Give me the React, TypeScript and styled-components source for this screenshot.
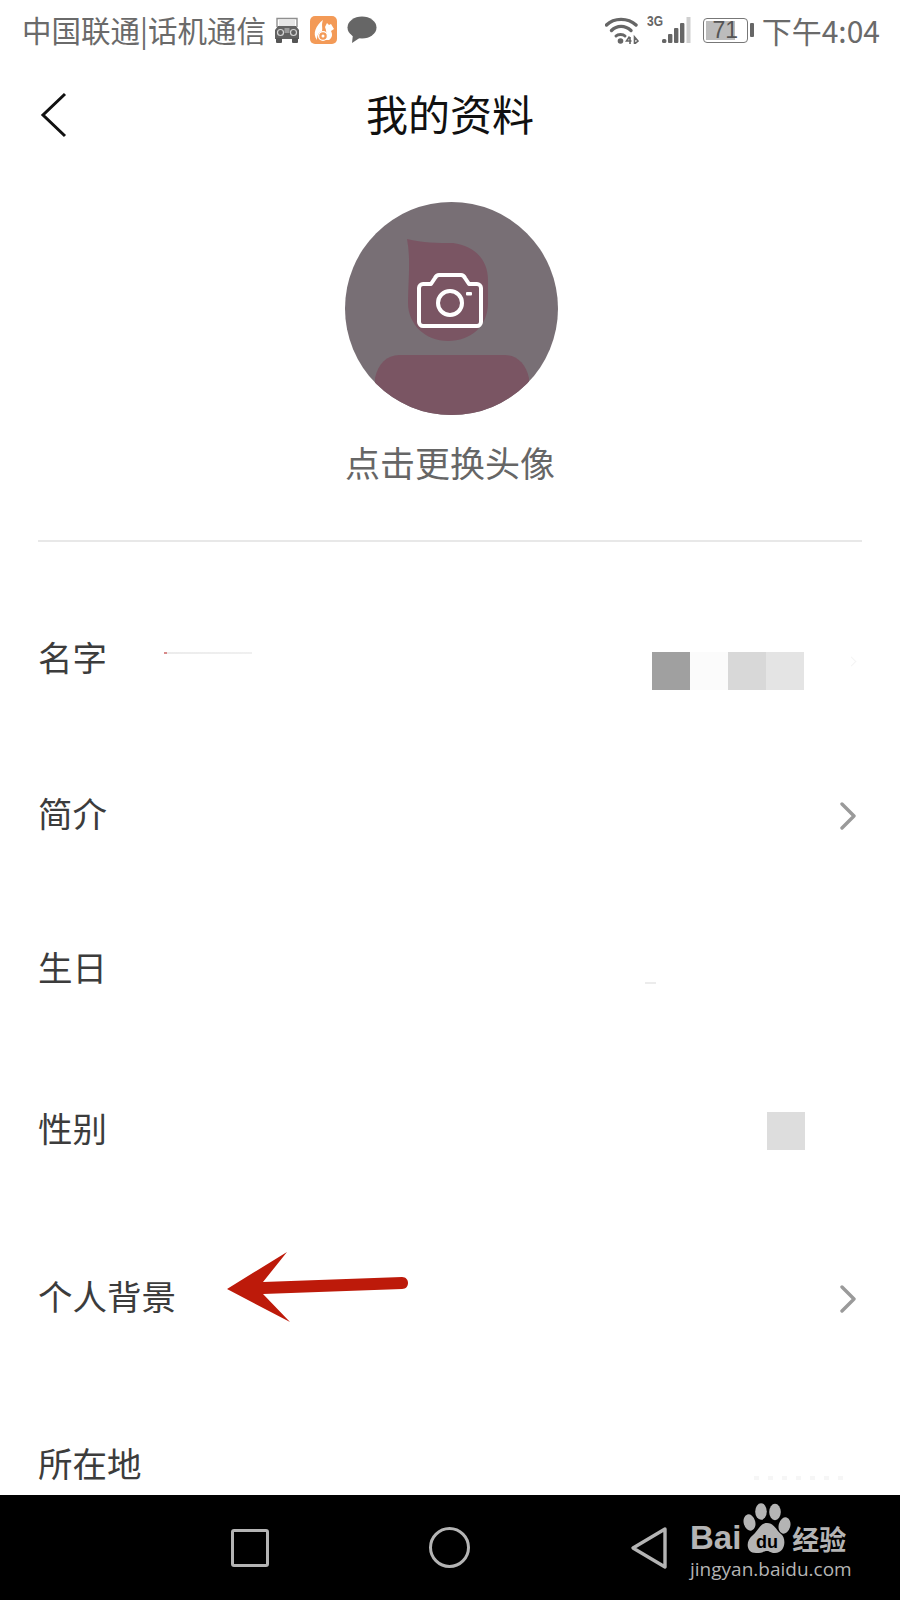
import React from 'react';
import styled, { createGlobalStyle } from 'styled-components';

const GlobalStyle = createGlobalStyle`
  html, body {
    margin: 0;
    padding: 0;
    background: #ffffff;
  }
  body {
    font-family: "Noto Sans CJK SC", "Liberation Sans", sans-serif;
  }
`;

const rows = [
  { label: '名字', height: 156 },
  { label: '简介', height: 155, chevron: true },
  { label: '生日', height: 154 },
  { label: '性别', height: 168 },
  { label: '个人背景', height: 167, chevron: true, pointer: true },
  { label: '所在地', height: 168 },
];

const App = () => {
  return (
    <Screen>
      <GlobalStyle />

      <Content>
        <StatusBar>
          <StatusLeft>
            <Carrier>中国联通|话机通信</Carrier>
            <TruckIcon />
            <UcIcon />
            <BubbleIcon />
          </StatusLeft>
          <StatusRight>
            <WifiIcon />
            <SignalIcon />
            <Battery>
              <BatteryBody>
                <BatteryFill />
                <BatteryText>71</BatteryText>
              </BatteryBody>
              <BatteryTip />
            </Battery>
            <Clock>下午4:04</Clock>
          </StatusRight>
        </StatusBar>

        <TitleBar>
          <BackButton>
            <svg width="28" height="46" viewBox="0 0 28 46" fill="none">
              <path d="M25 2 L3 23 L25 44" stroke="#111" strokeWidth="3" strokeLinejoin="miter" />
            </svg>
          </BackButton>
          <Title>我的资料</Title>
        </TitleBar>

        <AvatarBlock>
          <AvatarIcon />
          <AvatarHint>点击更换头像</AvatarHint>
        </AvatarBlock>

        <Divider />

        <RowList>
          {rows.map((row) => (
            <Row key={row.label} $height={row.height}>
              <RowLabel>{row.label}</RowLabel>
              {row.label === '名字' && <NameSmudge />}
              {row.label === '名字' && (
                <Mosaic>
                  <MosaicCell $shade="#a0a0a0" />
                  <MosaicCell $shade="#fbfbfb" />
                  <MosaicCell $shade="#d8d8d8" />
                  <MosaicCell $shade="#e4e4e4" />
                </Mosaic>
              )}
              {row.label === '名字' && <FaintChevron />}
              {row.label === '生日' && <BirthdaySmudge />}
              {row.label === '性别' && (
                <GenderMosaic>
                  <MosaicCell $shade="#dddddd" />
                </GenderMosaic>
              )}
              {row.label === '所在地' && <PlaceSmudge />}
              {row.chevron && (
                <Chevron>
                  <svg width="18" height="28" viewBox="0 0 18 28" fill="none">
                    <path d="M3 2 L15 14 L3 26" stroke="#9a9a9a" strokeWidth="3.4" strokeLinecap="round" strokeLinejoin="round" />
                  </svg>
                </Chevron>
              )}
              {row.pointer && <RedArrow />}
            </Row>
          ))}
        </RowList>
      </Content>

      <NavBar>
        <NavKeys>
          <NavSquare />
          <NavCircle />
          <NavBack>
            <svg width="38" height="44" viewBox="0 0 38 44" fill="none">
              <path d="M35 3 L3 22 L35 41 Z" stroke="#b4b4b4" strokeWidth="3.4" strokeLinejoin="round" />
            </svg>
          </NavBack>
        </NavKeys>
        <Watermark>
          <WatermarkTop>
            <WatermarkBai>Bai</WatermarkBai>
            <PawIcon />
            <WatermarkCn>经验</WatermarkCn>
          </WatermarkTop>
          <WatermarkUrl>jingyan.baidu.com</WatermarkUrl>
        </Watermark>
      </NavBar>
    </Screen>
  );
};

export default App;

/* drawings */

const TruckIcon = () => (
  <StatusGlyph width="26" height="28" viewBox="0 0 26 28">
    <path d="M3 11 V2.5 H23 V11" fill="none" stroke="#8f8f8f" strokeWidth="1.4" />
    <rect x="5" y="4" width="16" height="6" fill="#e6e6e6" />
    <path d="M4 10 H22 L25 14 V23 H1 V14 Z" fill="#626262" />
    <circle cx="6.5" cy="16.5" r="3" fill="#626262" stroke="#d4d4d4" strokeWidth="1.2" />
    <circle cx="19.5" cy="16.5" r="3" fill="#626262" stroke="#d4d4d4" strokeWidth="1.2" />
    <rect x="10.5" y="12" width="5" height="5" fill="#9a9a9a" />
    <rect x="2" y="22" width="6" height="5" rx="1" fill="#555" />
    <rect x="18" y="22" width="6" height="5" rx="1" fill="#555" />
  </StatusGlyph>
);

const UcIcon = () => (
  <StatusGlyph width="27" height="28" viewBox="0 0 27 28">
    <rect x="0" y="0" width="27" height="28" rx="5" fill="#f39a57" />
    <path d="M7 24 C2 18 6 9 13 4 C11 9 13 12 12 15 C9 16 7 19 7 24 Z" fill="#fff" />
    <path d="M15 11 L17 7 L19 9 L21 8 L24 13 L21 15 C23 19 22 22 19 24 H11 C16 23 18 19 15 11 Z" fill="#fff" />
    <circle cx="13" cy="20" r="4.4" fill="#f39a57" stroke="#fff" strokeWidth="1.3" />
    <circle cx="13" cy="20" r="1.5" fill="#fff" />
  </StatusGlyph>
);

const BubbleIcon = () => (
  <StatusGlyph width="30" height="28" viewBox="0 0 30 28">
    <ellipse cx="15" cy="11.5" rx="14.5" ry="11" fill="#666" />
    <path d="M6 18 L5 27 L14 21 Z" fill="#666" />
  </StatusGlyph>
);

const WifiIcon = () => (
  <StatusGlyph width="34" height="28" viewBox="0 0 34 28" $mr={8}>
    <path d="M1.5 9 C9 1.5 23 1.5 31 9" fill="none" stroke="#666" strokeWidth="3.4" strokeLinecap="round" />
    <path d="M6.5 14.5 C12 9 20 9 26 14.5" fill="none" stroke="#666" strokeWidth="3.4" strokeLinecap="round" />
    <path d="M11 20 C13 18 18 18 20 20" fill="none" stroke="#666" strokeWidth="3" strokeLinecap="round" />
    <circle cx="15.5" cy="25" r="2.8" fill="#666" />
    <path d="M24.5 20.5 L21.5 25 H26.5 M25 21 V28 M29.5 21 V28 L33 25 Z" fill="none" stroke="#666" strokeWidth="1.6" />
  </StatusGlyph>
);

const SignalIcon = () => (
  <SignalWrap>
    <SignalTag>3G</SignalTag>
    <svg width="30" height="30" viewBox="0 0 30 30">
      <rect x="1" y="24" width="4.4" height="4" rx="1.5" fill="#666" />
      <rect x="7" y="19" width="4.4" height="9" rx="1" fill="#666" />
      <rect x="13" y="13" width="4.4" height="15" rx="1" fill="#666" />
      <rect x="19" y="8" width="4.4" height="20" rx="1" fill="#666" />
      <rect x="25.5" y="2" width="4" height="26" fill="#cfcfcf" />
    </svg>
  </SignalWrap>
);

const AvatarIcon = () => (
  <AvatarSvg width="213" height="213" viewBox="0 0 213 213">
    <defs>
      <clipPath id="avatar-clip">
        <circle cx="106.5" cy="106.5" r="106.5" />
      </clipPath>
    </defs>
    <circle cx="106.5" cy="106.5" r="106.5" fill="#786f75" />
    <g clipPath="url(#avatar-clip)" fill="#7a5563">
      <path d="M62 37 C78 41 92 41 108 41 C130 44 143 58 143 78 V101 C143 124 126 139 103 139 C80 139 63 122 63 101 C63 80 66 58 62 37 Z" />
      <path d="M30 176 C33 162 42 153 54 153 H160 C172 153 181 162 184 176 V213 H30 Z" />
    </g>
    <g fill="none" stroke="#ffffff" strokeWidth="4" strokeLinejoin="round">
      <path d="M78 82 H86 L90 76 C91 74 92 73 94 73 H116 C118 73 119 74 120 76 L124 82 H132 C134 82 136 84 136 86 V120 C136 122 134 124 132 124 H78 C76 124 74 122 74 120 V86 C74 84 76 82 78 82 Z" />
      <circle cx="105" cy="101" r="12" />
    </g>
    <rect x="121" y="90" width="6" height="3.4" rx="1" fill="#ffffff" />
  </AvatarSvg>
);

const RedArrow = () => (
  <ArrowOverlay width="184" height="76" viewBox="0 0 184 76">
    <path d="M1 39 L61 2 L37 32 L176 27 C180 27 182 30 182 33 C182 36 180 39 176 39 L37 44 L64 72 Z" fill="#bd1a0a" />
  </ArrowOverlay>
);

const PawIcon = () => (
  <PawWrap width="48" height="52" viewBox="0 0 48 52">
    <ellipse cx="18" cy="8.5" rx="5.8" ry="8.3" fill="#b4b4b4" />
    <ellipse cx="32" cy="9" rx="5.8" ry="8.3" fill="#b4b4b4" />
    <ellipse cx="6.5" cy="19.5" rx="5.8" ry="8.3" transform="rotate(-15 6.5 19.5)" fill="#b4b4b4" />
    <ellipse cx="41.5" cy="22.5" rx="5.8" ry="8.3" transform="rotate(15 41.5 22.5)" fill="#b4b4b4" />
    <path d="M24 20 C31 20 33 27 38 31 C44 36 42 50 32 50 C27 50 27 48 24 48 C21 48 20 50 13 50 C3 50 2 38 10 32 C15 28 17 20 24 20 Z" fill="#b4b4b4" />
    <PawText x="24" y="45" textAnchor="middle">du</PawText>
  </PawWrap>
);

/* page */

const Screen = styled.div`
  width: 900px;
  height: 1600px;
  display: flex;
  flex-direction: column;
  overflow: hidden;
  background: #ffffff;
`;

const Content = styled.main`
  height: 1495px;
  overflow: hidden;
  flex: none;
`;

const StatusBar = styled.div`
  height: 60px;
  display: flex;
  align-items: center;
  justify-content: space-between;
  padding: 0 20px 0 22px;
  color: #6a6a6a;
`;

const StatusLeft = styled.div`
  display: flex;
  align-items: center;
  gap: 10px;
`;

const StatusRight = styled.div`
  display: flex;
  align-items: center;
`;

const Carrier = styled.span`
  font-size: 29.5px;
  line-height: 60px;
  white-space: nowrap;
  margin-right: -2px;
  margin-top: -2px;
`;

const StatusGlyph = styled.svg<{ $mr?: number }>`
  display: block;
  flex: none;
  margin-right: ${(p) => p.$mr ?? 0}px;
`;

const SignalWrap = styled.div`
  position: relative;
  width: 44px;
  height: 30px;
  display: flex;
  justify-content: flex-end;
  margin-right: 12px;
`;

const SignalTag = styled.span`
  position: absolute;
  left: 0;
  top: -2px;
  font-family: "Liberation Sans", sans-serif;
  font-size: 15px;
  font-weight: 700;
  line-height: 16px;
  color: #666;
  transform: scaleX(0.8);
  transform-origin: left center;
`;

const Battery = styled.div`
  display: flex;
  align-items: center;
  gap: 2px;
  margin-right: 8px;
`;

const BatteryBody = styled.div`
  position: relative;
  width: 45px;
  height: 25px;
  border: 1.5px solid #777;
  border-radius: 4px;
  box-sizing: border-box;
  padding: 2px;
`;

const BatteryFill = styled.div`
  width: 76%;
  height: 100%;
  background: #bcbcbc;
`;

const BatteryText = styled.span`
  position: absolute;
  inset: 0;
  text-align: center;
  font-family: "Liberation Sans", sans-serif;
  font-size: 23px;
  line-height: 22px;
  color: #555;
`;

const BatteryTip = styled.div`
  width: 4px;
  height: 14px;
  background: #666;
  border-radius: 1px;
`;

const Clock = styled.span`
  font-size: 30px;
  line-height: 60px;
  white-space: nowrap;
  margin-top: -1px;
`;

const TitleBar = styled.header`
  position: relative;
  height: 110px;
  display: flex;
  align-items: center;
  justify-content: center;
`;

const BackButton = styled.div`
  position: absolute;
  left: 40px;
  top: 32px;
  line-height: 0;
`;

const Title = styled.h1`
  margin: -4px 0 0;
  font-size: 42px;
  font-weight: 400;
  line-height: 60px;
  color: #111111;
`;

const AvatarBlock = styled.section`
  display: flex;
  flex-direction: column;
  align-items: center;
  padding-top: 32px;
  height: 370px;
  box-sizing: border-box;
`;

const AvatarSvg = styled.svg`
  display: block;
  margin-left: 3px;
`;

const AvatarHint = styled.div`
  margin-top: 22px;
  font-size: 35px;
  line-height: 50px;
  color: #666666;
`;

const Divider = styled.hr`
  margin: 0 38px;
  border: 0;
  height: 2px;
  background: #e8e8e8;
`;

const RowList = styled.div`
  padding-top: 40px;
`;

const Row = styled.div<{ $height: number }>`
  position: relative;
  height: ${(p) => p.$height}px;
  display: flex;
  align-items: center;
  padding: 0 38px;
`;

const RowLabel = styled.span`
  font-size: 34.5px;
  line-height: 50px;
  color: #3c3c3c;
  margin-top: -8px;
`;

const Chevron = styled.div`
  position: absolute;
  right: 43px;
  top: 50%;
  margin-top: -14px;
  line-height: 0;
`;

const Mosaic = styled.div`
  position: absolute;
  left: 652px;
  top: 70px;
  display: flex;
`;

const GenderMosaic = styled.div`
  position: absolute;
  left: 767px;
  top: 65px;
  display: flex;
`;

const MosaicCell = styled.div<{ $shade: string }>`
  width: 38px;
  height: 38px;
  background: ${(p) => p.$shade};
`;

const NameSmudge = styled.div`
  position: absolute;
  left: 164px;
  top: 70px;
  width: 88px;
  height: 2px;
  background: linear-gradient(90deg, #d88a8a 0 3px, #ececec 3px, #f0f0f0 100%);
`;

const FaintChevron = styled.div`
  position: absolute;
  left: 848px;
  top: 76px;
  width: 6px;
  height: 6px;
  border-top: 1px solid #f4f4f4;
  border-right: 1px solid #f4f4f4;
  transform: rotate(45deg);
`;

const BirthdaySmudge = styled.div`
  position: absolute;
  left: 645px;
  top: 89px;
  width: 11px;
  height: 2px;
  background: #ececec;
`;

const PlaceSmudge = styled.div`
  position: absolute;
  left: 754px;
  top: 94px;
  width: 96px;
  height: 4px;
  background: repeating-linear-gradient(90deg, #f6f6f6 0 5px, #ffffff 5px 14px);
`;

const ArrowOverlay = styled.svg`
  position: absolute;
  left: 226px;
  top: 35px;
`;

/* bottom bar */

const NavBar = styled.nav`
  position: relative;
  flex: 1;
  background: #000000;
`;

const NavKeys = styled.div`
  height: 100%;
  display: flex;
  align-items: center;
  justify-content: center;
  gap: 160px;
  padding-right: 2px;
  box-sizing: border-box;
`;

const NavSquare = styled.div`
  width: 38px;
  height: 38px;
  box-sizing: border-box;
  border: 3.4px solid #b4b4b4;
  border-radius: 3px;
`;

const NavCircle = styled.div`
  width: 41px;
  height: 41px;
  box-sizing: border-box;
  border: 3.4px solid #b4b4b4;
  border-radius: 50%;
`;

const NavBack = styled.div`
  line-height: 0;
`;

const Watermark = styled.div`
  position: absolute;
  left: 690px;
  top: 8px;
  width: 162px;
`;

const WatermarkTop = styled.div`
  display: flex;
  align-items: flex-end;
  height: 52px;
`;

const WatermarkBai = styled.span`
  font-family: "Liberation Sans", sans-serif;
  font-size: 33px;
  font-weight: 700;
  line-height: 34px;
  color: #b4b4b4;
  margin-right: 2px;
`;

const PawWrap = styled.svg`
  display: block;
  flex: none;
`;

const PawText = styled.text`
  font-family: "Liberation Sans", sans-serif;
  font-size: 18px;
  font-weight: 700;
  fill: #000000;
`;

const WatermarkCn = styled.span`
  font-size: 27px;
  font-weight: 700;
  line-height: 32px;
  color: #b4b4b4;
  white-space: nowrap;
  margin-left: 1px;
`;

const WatermarkUrl = styled.div`
  font-family: "Open Sans", sans-serif;
  font-size: 19px;
  line-height: 24px;
  margin-top: 2px;
  color: #b4b4b4;
  white-space: nowrap;
`;
